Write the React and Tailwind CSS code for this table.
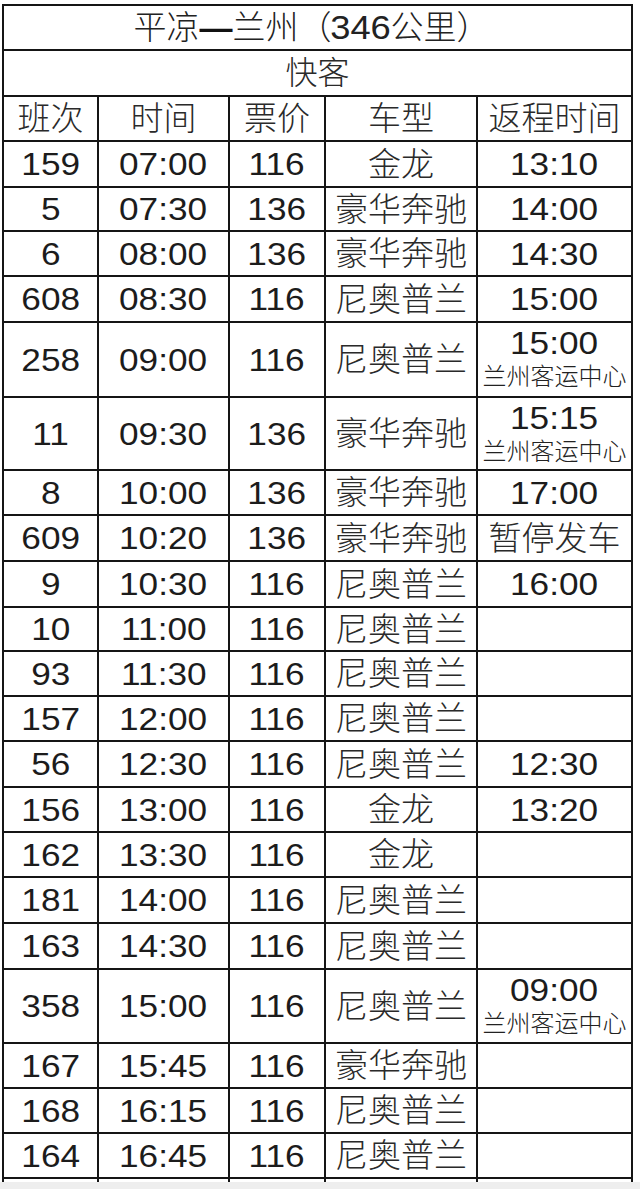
const rows = [
  { no: "159", time: "07:00", price: "116", bus: "金龙", back: "13:10", h: "h-[44px]" },
  { no: "5", time: "07:30", price: "136", bus: "豪华奔驰", back: "14:00", h: "h-[42px]" },
  { no: "6", time: "08:00", price: "136", bus: "豪华奔驰", back: "14:30", h: "h-[43px]" },
  { no: "608", time: "08:30", price: "116", bus: "尼奥普兰", back: "15:00", h: "h-[44px]" },
  { no: "258", time: "09:00", price: "116", bus: "尼奥普兰", back: "15:00", station: "兰州客运中心", h: "h-[73px]" },
  { no: "11", time: "09:30", price: "136", bus: "豪华奔驰", back: "15:15", station: "兰州客运中心", h: "h-[71px]" },
  { no: "8", time: "10:00", price: "136", bus: "豪华奔驰", back: "17:00", h: "h-[43px]" },
  { no: "609", time: "10:20", price: "136", bus: "豪华奔驰", note: "暂停发车", h: "h-[44px]" },
  { no: "9", time: "10:30", price: "116", bus: "尼奥普兰", back: "16:00", h: "h-[44px]" },
  { no: "10", time: "11:00", price: "116", bus: "尼奥普兰", h: "h-[42px]" },
  { no: "93", time: "11:30", price: "116", bus: "尼奥普兰", h: "h-[43px]" },
  { no: "157", time: "12:00", price: "116", bus: "尼奥普兰", h: "h-[43px]" },
  { no: "56", time: "12:30", price: "116", bus: "尼奥普兰", back: "12:30", h: "h-[44px]" },
  { no: "156", time: "13:00", price: "116", bus: "金龙", back: "13:20", h: "h-[43px]" },
  { no: "162", time: "13:30", price: "116", bus: "金龙", h: "h-[43px]" },
  { no: "181", time: "14:00", price: "116", bus: "尼奥普兰", h: "h-[44px]" },
  { no: "163", time: "14:30", price: "116", bus: "尼奥普兰", h: "h-[44px]" },
  { no: "358", time: "15:00", price: "116", bus: "尼奥普兰", back: "09:00", station: "兰州客运中心", h: "h-[72px]" },
  { no: "167", time: "15:45", price: "116", bus: "豪华奔驰", h: "h-[43px]" },
  { no: "168", time: "16:15", price: "116", bus: "尼奥普兰", h: "h-[43px]" },
  { no: "164", time: "16:45", price: "116", bus: "尼奥普兰", h: "h-[43px]" },
]

const cols = "grid grid-cols-[93px_129px_94px_150px_153px] gap-[2px]"

function Num({ children }) {
  return <span className="inline-block scale-x-110 text-[32px] leading-none text-[#1c1c1c]">{children}</span>
}

function Cell({ className = "", children }) {
  return <div className={"bg-white flex items-center justify-center " + className}>{children}</div>
}

function Han({ children }) {
  return <span className="text-[33px] font-light leading-none text-[#2a2a2a]">{children}</span>
}

export default function App() {
  return (
    <div className="h-[1189px] w-[640px] flex flex-col bg-white font-['Liberation_Sans','Noto_Sans_CJK_SC',sans-serif] overflow-hidden">
      <div className="ml-[2px] mt-[4px] w-[631px] bg-[#151515] p-[2px] pb-0">
        <div className={cols}>
          <Cell className="col-span-5 h-[43px]">
            <span className="mr-[12px] text-[33px] font-light leading-none text-[#222]">
              平凉<span className="font-bold text-[#111]">—</span>兰州（<span className="inline-block scale-x-110 px-[2px]">346</span>公里）
            </span>
          </Cell>
          <Cell className="col-span-5 h-[44px]">
            <span className="text-[32px] font-light leading-none text-[#2a2a2a]">快客</span>
          </Cell>
          {["班次", "时间", "票价", "车型", "返程时间"].map((t) => (
            <Cell key={t} className="h-[43px]">
              <Han>{t}</Han>
            </Cell>
          ))}
          {rows.map((r) => (
            <div key={r.no} className="contents">
              <Cell className={r.h}><Num>{r.no}</Num></Cell>
              <Cell className={r.h}><Num>{r.time}</Num></Cell>
              <Cell className={r.h}><Num>{r.price}</Num></Cell>
              <Cell className={r.h}><Han>{r.bus}</Han></Cell>
              {r.station ? (
                <div className={"bg-white flex flex-col items-center pt-[6px] " + r.h}>
                  <span className="h-[28px] flex items-center"><Num>{r.back}</Num></span>
                  <span className="mt-[6px] h-[28px] flex items-center text-[24px] font-light leading-none text-[#222]">{r.station}</span>
                </div>
              ) : (
                <Cell className={r.h}>
                  {r.back && <Num>{r.back}</Num>}
                  {r.note && <Han>{r.note}</Han>}
                </Cell>
              )}
            </div>
          ))}
        </div>
        <div className="h-[2px]" />
      </div>
      <div className="ml-[2px] w-[631px] bg-[#151515] px-[2px]">
        <div className={cols}>
          {[0, 1, 2, 3, 4].map((i) => (
            <div key={i} className="h-[3px] bg-white" />
          ))}
        </div>
      </div>
      <div className="flex-1 bg-[#eeeeee]" />
    </div>
  )
}
